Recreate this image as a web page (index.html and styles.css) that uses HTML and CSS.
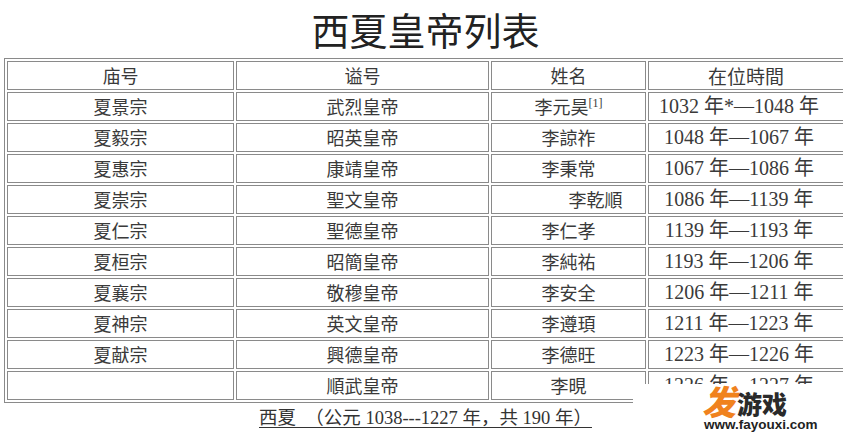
FILE: index.html
```html
<!DOCTYPE html>
<html lang="zh">
<head>
<meta charset="utf-8">
<title>西夏皇帝列表</title>
<link rel="stylesheet" href="styles.css">
</head>
<body>
<div class="page">
  <h1 class="title">西夏皇帝列表</h1>
  <table class="list">
    <colgroup>
      <col class="c1"><col class="c2"><col class="c3"><col class="c4">
    </colgroup>
    <tr><td>庙号</td><td>谥号</td><td>姓名</td><td class="head4">在位時間</td></tr>
    <tr><td>夏景宗</td><td>武烈皇帝</td><td>李元昊<sup class="ref">[1]</sup></td><td class="date">1032 年*—1048 年</td></tr>
    <tr><td>夏毅宗</td><td>昭英皇帝</td><td>李諒祚</td><td class="date">1048 年—1067 年</td></tr>
    <tr><td>夏惠宗</td><td>康靖皇帝</td><td>李秉常</td><td class="date">1067 年—1086 年</td></tr>
    <tr><td>夏崇宗</td><td>聖文皇帝</td><td class="shift">李乾順</td><td class="date">1086 年—1139 年</td></tr>
    <tr><td>夏仁宗</td><td>聖德皇帝</td><td>李仁孝</td><td class="date">1139 年—1193 年</td></tr>
    <tr><td>夏桓宗</td><td>昭簡皇帝</td><td>李純祐</td><td class="date">1193 年—1206 年</td></tr>
    <tr><td>夏襄宗</td><td>敬穆皇帝</td><td>李安全</td><td class="date">1206 年—1211 年</td></tr>
    <tr><td>夏神宗</td><td>英文皇帝</td><td>李遵頊</td><td class="date">1211 年—1223 年</td></tr>
    <tr><td>夏献宗</td><td>興德皇帝</td><td>李德旺</td><td class="date">1223 年—1226 年</td></tr>
    <tr><td></td><td>順武皇帝</td><td>李晛</td><td class="date">1226 年—1227 年</td></tr>
  </table>
  <p class="caption"><span class="u">西夏　（公元 1038---1227 年，共 190 年）</span></p>
  <p class="faint">西夏是中国历史上由党项人在中国西北部建立的一个王朝，共传十帝</p>
  <div class="mark">
    <div class="mark-top"><span class="fa">发</span><span class="yx">游戏</span></div>
    <div class="mark-url">www.fayouxi.com</div>
  </div>
</div>
</body>
</html>
```
FILE: styles.css
```css
html, body {
  margin: 0;
  padding: 0;
  background: #ffffff;
  overflow: hidden;
}
.page {
  position: relative;
  width: 851px;
  height: 435px;
  overflow: hidden;
  font-family: "Noto Sans CJK SC", sans-serif;
  color: #3a3a3a;
}
.title {
  margin: 0;
  padding-top: 6px;
  height: 52px;
  line-height: 46px;
  font-size: 38px;
  font-weight: normal;
  text-align: center;
  color: #222222;
}
.list {
  margin-left: 4px;
  border: 1px solid #8a8a8a;
  border-collapse: separate;
  border-spacing: 2px;
  table-layout: fixed;
  width: 843px;
}
.c1 { width: 227px; }
.c2 { width: 253px; }
.c3 { width: 155px; }
.c4 { width: 196px; }
.list td {
  border: 1px solid #8a8a8a;
  padding: 0;
  height: 27px;
  line-height: 27px;
  text-align: center;
  font-size: 18px;
  white-space: nowrap;
  overflow: hidden;
}
.list td.head4 {
  font-size: 19px;
}
.list td.date {
  font-family: "Liberation Serif", "Noto Sans CJK SC", serif;
  font-size: 20px;
  padding-right: 14px;
}
.list td.shift {
  padding-left: 54px;
}
.ref {
  font-family: "Liberation Serif", serif;
  font-size: 12px;
  vertical-align: 7px;
  line-height: 0;
}
.caption {
  margin: 3px 0 0 0;
  line-height: 24px;
  font-size: 18.5px;
  text-align: center;
  font-family: "Liberation Serif", "Noto Sans CJK SC", serif;
  color: #333333;
}
.u {
  text-decoration: underline;
  text-underline-offset: 3px;
}
.faint {
  margin: 2px 0 0 0;
  font-size: 17px;
  line-height: 24px;
  text-align: center;
  color: #e6e6e6;
}
.mark {
  position: absolute;
  left: 633px;
  top: 384px;
  width: 218px;
  height: 51px;
  background: #ffffff;
  display: flex;
  flex-direction: column;
  align-items: flex-start;
  padding-left: 69px;
  box-sizing: border-box;
}
.mark-top {
  display: flex;
  align-items: flex-end;
  height: 34px;
}
.fa {
  font-size: 34px;
  line-height: 34px;
  font-weight: 900;
  font-style: italic;
  color: #f0821e;
}
.yx {
  font-size: 25px;
  line-height: 29px;
  font-weight: 900;
  color: #2a2a2a;
  margin-left: 1px;
}
.mark-url {
  font-family: "Liberation Sans", sans-serif;
  font-size: 13.5px;
  font-weight: bold;
  line-height: 13px;
  color: #222222;
  margin-left: 2px;
}
```
